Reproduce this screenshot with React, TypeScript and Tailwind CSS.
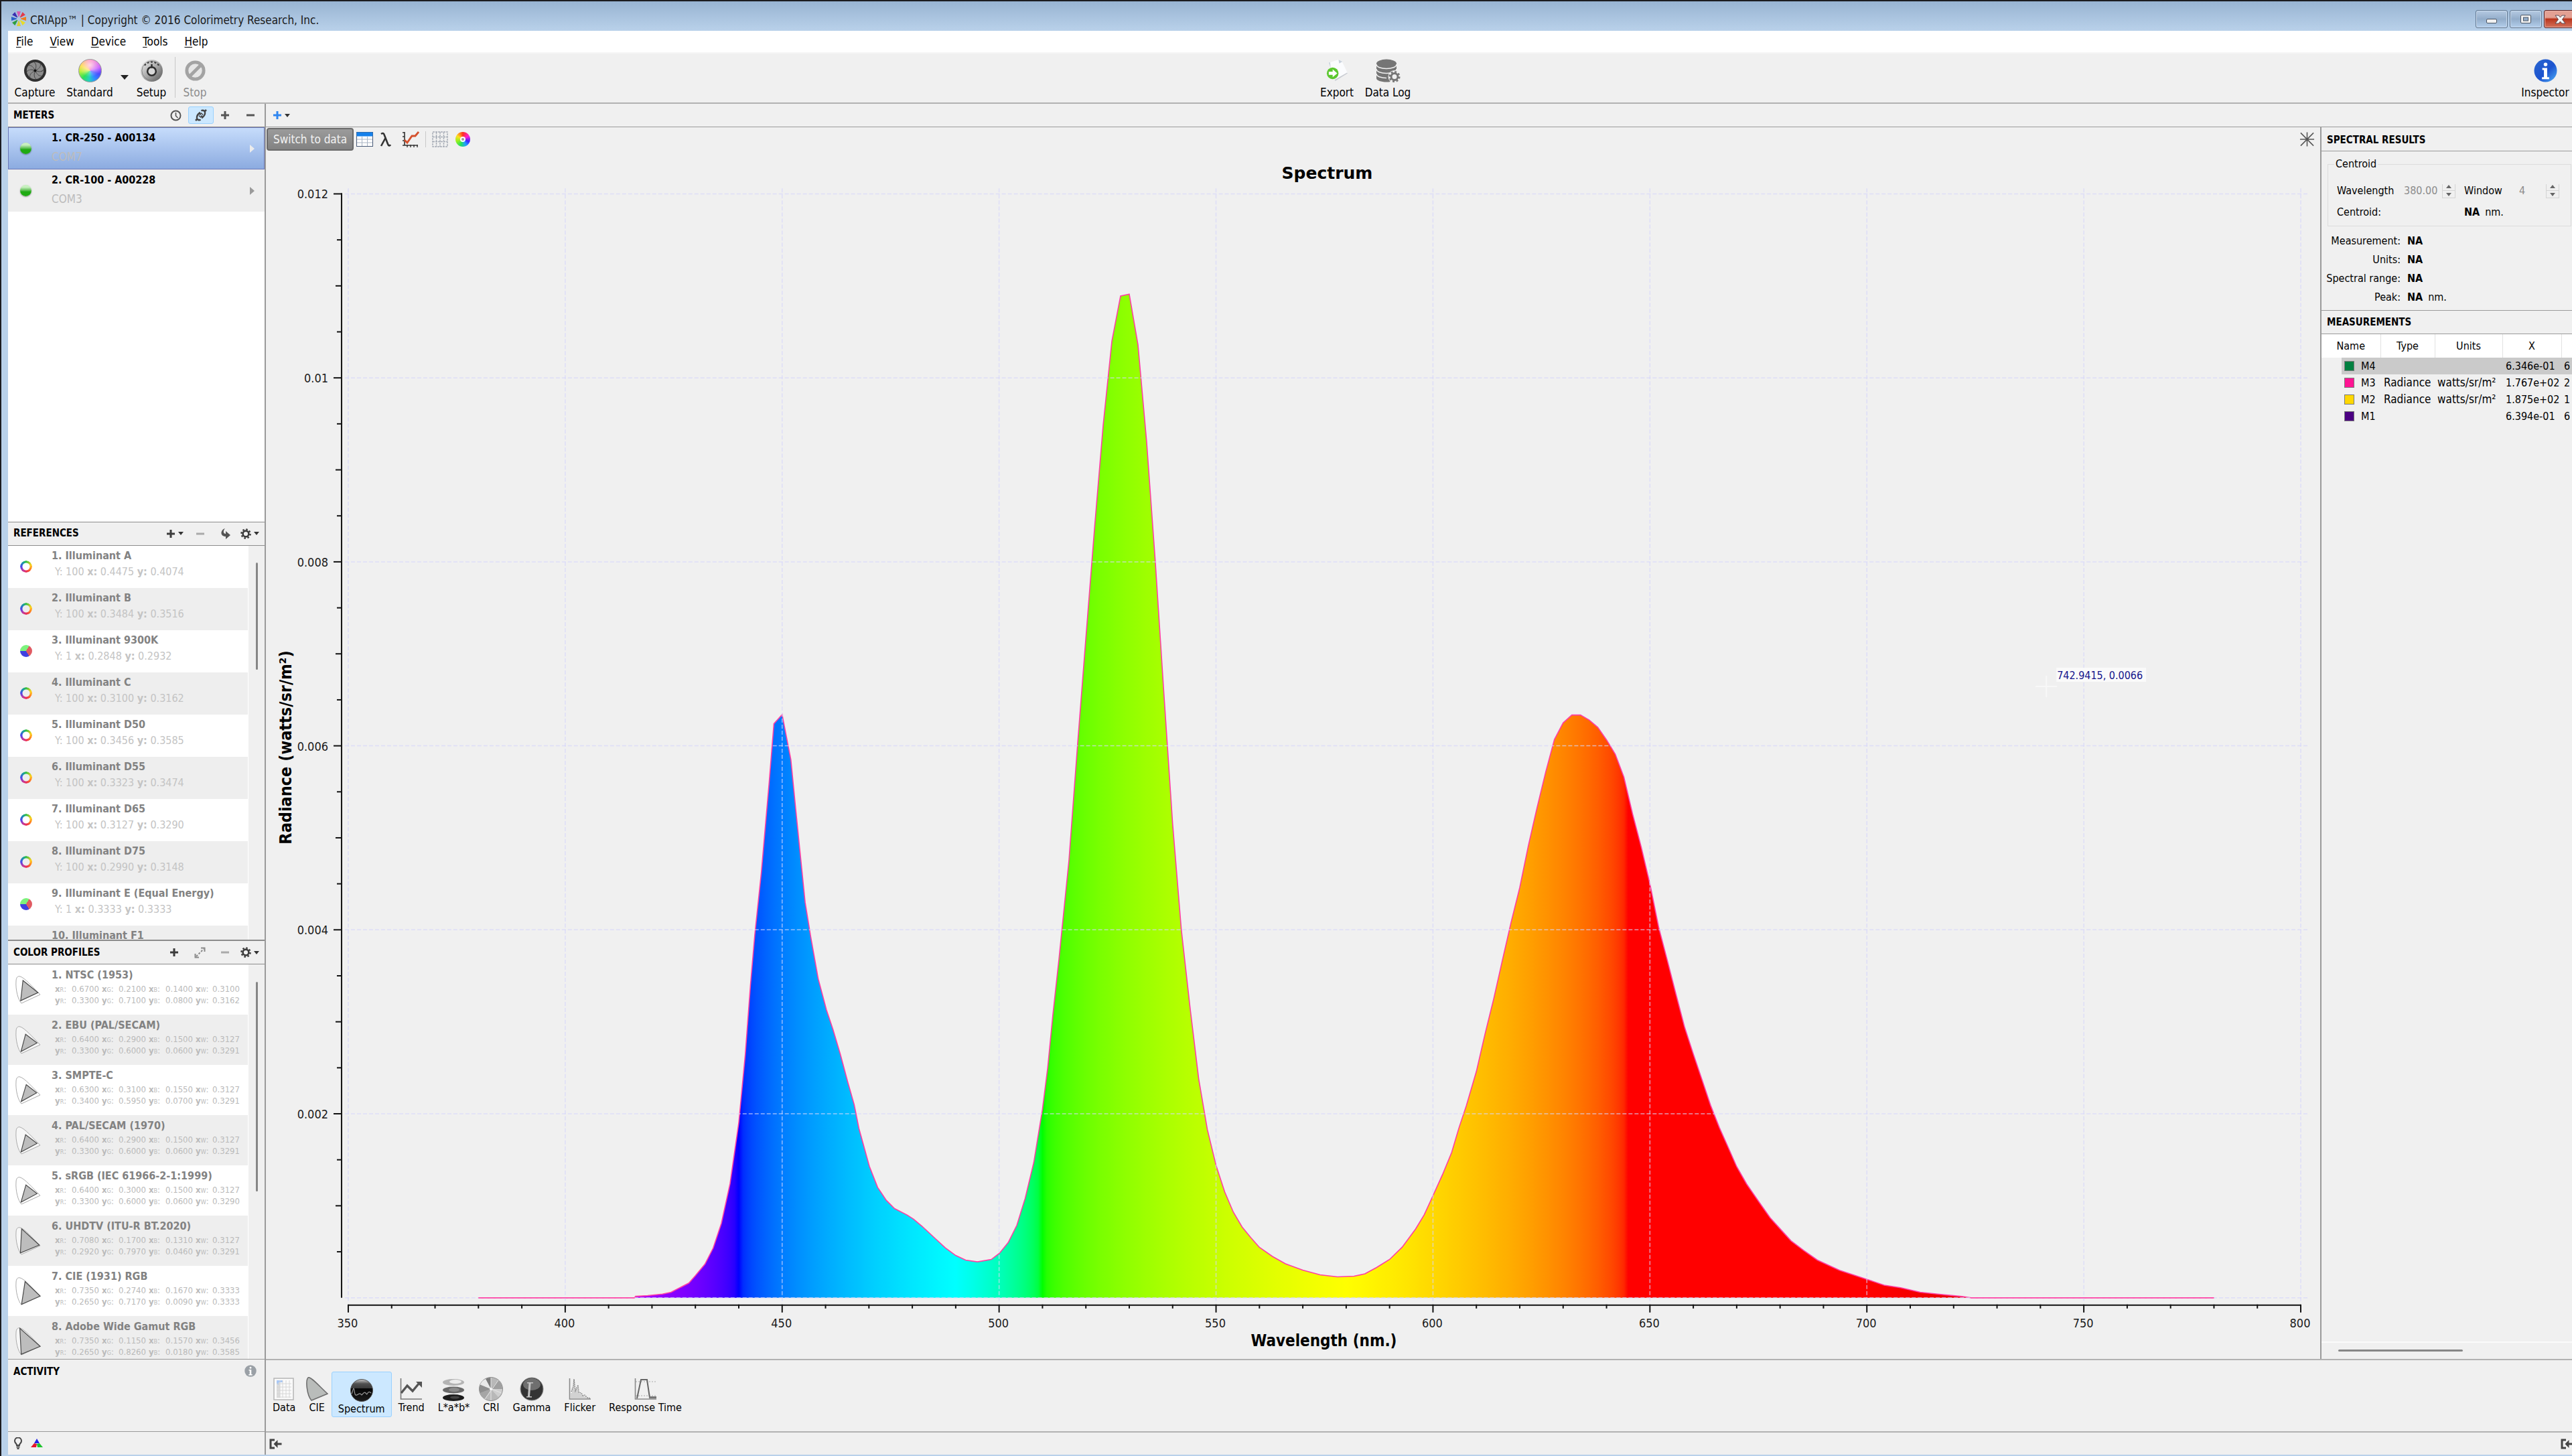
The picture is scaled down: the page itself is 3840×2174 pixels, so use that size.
import type { ReactNode } from "react";

// wavelength (nm) / radiance (1e-3 watts/sr/m²)
const spectrum: [number, number][] = [
  [380, 0], [416, 0], [416.2, 0.015], [419, 0.024], [422.4, 0.04], [424.4, 0.06], [428.5, 0.16], [430, 0.24],
  [432.2, 0.365], [434.1, 0.54], [436, 0.81], [438, 1.24], [440, 1.9], [441.5, 2.64], [442.7, 3.4], [443.7, 3.95],
  [445.2, 4.62], [447, 5.6], [448.1, 6.24], [450, 6.34], [452, 5.85], [453.2, 5.28], [455.3, 4.3], [456.6, 3.92],
  [458.3, 3.47], [460.2, 3.13], [461.7, 2.92], [463.4, 2.65], [465.1, 2.35], [466.6, 2.1], [467.7, 1.84], [470.1, 1.43],
  [472, 1.2], [474, 1.06], [475.9, 0.97], [478.8, 0.9], [480.3, 0.855], [482.3, 0.775], [485.2, 0.648], [487.6, 0.544],
  [490, 0.46], [492.3, 0.41], [495, 0.39], [498.2, 0.416], [500.1, 0.484], [502.1, 0.6], [504.1, 0.79], [506, 1.08],
  [508, 1.47], [510, 2.05], [511.2, 2.5], [512.4, 3.08], [513.8, 3.68], [516.1, 4.75], [518.1, 6.02], [520, 7.17],
  [522, 8.37], [524, 9.49], [526, 10.4], [528, 10.89], [530, 10.91], [532, 10.36], [534, 9.31], [536, 8], [538, 6.56],
  [540, 5.15], [542, 4], [544, 3.16], [546, 2.38], [548, 1.83], [550, 1.44], [552, 1.15], [554, 0.93], [556, 0.77],
  [558, 0.656], [560, 0.548], [563, 0.45], [566, 0.37], [570, 0.3], [574, 0.25], [578, 0.228], [581.8, 0.235],
  [584.3, 0.26], [587, 0.33], [590, 0.417], [592.9, 0.55], [596, 0.748], [598, 0.904], [600, 1.11], [602.2, 1.34],
  [604.3, 1.58], [606, 1.85], [607.7, 2.09], [610, 2.46], [612, 2.87], [614, 3.25], [616, 3.67], [618, 4.08],
  [620, 4.46], [622, 4.92], [624, 5.33], [626, 5.72], [628, 6.07], [630, 6.25], [632, 6.335], [634, 6.335],
  [636, 6.28], [638, 6.2], [640, 6.065], [642, 5.91], [644, 5.66], [646, 5.26], [648, 4.9], [650, 4.5], [652, 4.03],
  [654, 3.67], [656, 3.3], [658, 2.94], [660, 2.65], [662, 2.37], [664, 2.09], [666, 1.85], [668, 1.64], [670, 1.425],
  [672.3, 1.236], [675.2, 1.037], [677.7, 0.87], [680.3, 0.734], [682.5, 0.62], [685.4, 0.516], [688.6, 0.41],
  [693.7, 0.298], [700, 0.2], [704, 0.137], [707.8, 0.109], [712.3, 0.06], [716.7, 0.038], [722, 0.014], [724, 0],
  [780, 0],
];

const px = (nm: number) => 123 + (nm - 350) * 6.48;
const py = (v: number) => 1712 - v * 137.4;

const line = spectrum.map(([nm, v]) => `${px(nm).toFixed(1)},${py(v).toFixed(1)}`).join(" ");

function wavelengthColor(w: number) {
  let r = 0;
  let g = 0;
  let b = 0;
  if (w < 440) {
    r = (440 - w) / 60;
    b = 1;
  } else if (w < 490) {
    g = (w - 440) / 50;
    b = 1;
  } else if (w < 510) {
    g = 1;
    b = (510 - w) / 20;
  } else if (w < 580) {
    r = (w - 510) / 70;
    g = 1;
  } else if (w < 645) {
    r = 1;
    g = (645 - w) / 65;
  } else {
    r = 1;
  }
  const fade = w > 700 ? 0.3 + (0.7 * (780 - w)) / 80 : 1;
  const c = (n: number) => Math.round(255 * Math.pow(n * fade, 0.45));
  return `rgb(${c(r)},${c(g)},${c(b)})`;
}

const stops = Array.from({ length: 401 }, (_, i) => 380 + i);

const references = [
  ["1. Illuminant A", "100", "0.4475", "0.4074"],
  ["2. Illuminant B", "100", "0.3484", "0.3516"],
  ["3. Illuminant 9300K", "1", "0.2848", "0.2932"],
  ["4. Illuminant C", "100", "0.3100", "0.3162"],
  ["5. Illuminant D50", "100", "0.3456", "0.3585"],
  ["6. Illuminant D55", "100", "0.3323", "0.3474"],
  ["7. Illuminant D65", "100", "0.3127", "0.3290"],
  ["8. Illuminant D75", "100", "0.2990", "0.3148"],
  ["9. Illuminant E (Equal Energy)", "1", "0.3333", "0.3333"],
  ["10. Illuminant F1", "", "", ""],
];

const profiles = [
  { name: "1. NTSC (1953)", x: ["0.6700", "0.2100", "0.1400", "0.3100"], y: ["0.3300", "0.7100", "0.0800", "0.3162"] },
  { name: "2. EBU (PAL/SECAM)", x: ["0.6400", "0.2900", "0.1500", "0.3127"], y: ["0.3300", "0.6000", "0.0600", "0.3291"] },
  { name: "3. SMPTE-C", x: ["0.6300", "0.3100", "0.1550", "0.3127"], y: ["0.3400", "0.5950", "0.0700", "0.3291"] },
  { name: "4. PAL/SECAM (1970)", x: ["0.6400", "0.2900", "0.1500", "0.3127"], y: ["0.3300", "0.6000", "0.0600", "0.3291"] },
  { name: "5. sRGB (IEC 61966-2-1:1999)", x: ["0.6400", "0.3000", "0.1500", "0.3127"], y: ["0.3300", "0.6000", "0.0600", "0.3290"] },
  { name: "6. UHDTV (ITU-R BT.2020)", x: ["0.7080", "0.1700", "0.1310", "0.3127"], y: ["0.2920", "0.7970", "0.0460", "0.3291"] },
  { name: "7. CIE (1931) RGB", x: ["0.7350", "0.2740", "0.1670", "0.3333"], y: ["0.2650", "0.7170", "0.0090", "0.3333"] },
  { name: "8. Adobe Wide Gamut RGB", x: ["0.7350", "0.1150", "0.1570", "0.3456"], y: ["0.2650", "0.8260", "0.0180", "0.3585"] },
];

const measurements = [
  { name: "M4", color: "bg-[#008040]", type: "", units: "", x: "6.346e-01", y: "6" },
  { name: "M3", color: "bg-[#ff1493]", type: "Radiance", units: "watts/sr/m²", x: "1.767e+02", y: "2" },
  { name: "M2", color: "bg-[#ffd700]", type: "Radiance", units: "watts/sr/m²", x: "1.875e+02", y: "1" },
  { name: "M1", color: "bg-[#4b0082]", type: "", units: "", x: "6.394e-01", y: "6" },
];

/* ---------- small glyphs ---------- */

function Caret() {
  return (
    <svg className="w-[8px] h-[5px]" viewBox="0 0 8 5">
      <path d="M0 0h8L4 5z" fill="#333" />
    </svg>
  );
}

function Plus({ color = "#3c3c3c" }: { color?: string }) {
  return (
    <svg className="w-[14px] h-[14px]" viewBox="0 0 14 14">
      <path d="M7 1v12M1 7h12" stroke={color} strokeWidth="3" />
    </svg>
  );
}

function Minus({ color = "#555" }: { color?: string }) {
  return (
    <svg className="w-[14px] h-[14px]" viewBox="0 0 14 14">
      <path d="M1 7h12" stroke={color} strokeWidth="3" />
    </svg>
  );
}

function Gear() {
  return (
    <svg className="w-[16px] h-[16px]" viewBox="0 0 16 16" fill="none" stroke="#3c3c3c">
      <circle cx="8" cy="8" r="4.4" strokeWidth="2.6" />
      <circle cx="8" cy="8" r="6.6" strokeWidth="2.4" strokeDasharray="2.6 2.58" />
    </svg>
  );
}

function Plug() {
  return (
    <svg className="w-[18px] h-[18px]" viewBox="0 0 18 18" fill="none" stroke="#444">
      <path d="M1 17l3-3M14 4l3-3" strokeWidth="2.600" />
      <path d="M8.500 15.500c-2 1.500-5 .5-5.500-2-.5-3 1.500-6 4-8l1.500 3" strokeWidth="2.400" />
      <path d="M9.500 2.500c2-1.500 5-.5 5.500 2 .5 3-1.500 6-4 8L9.500 9.500" strokeWidth="2.400" />
      <path d="M6 9.500l3 3M9 5.500l3 3" strokeWidth="1.600" />
    </svg>
  );
}

function Info({ muted = false }: { muted?: boolean }) {
  return (
    <svg className={muted ? "w-[18px] h-[18px]" : "w-[35px] h-[35px]"} viewBox="0 0 36 36">
      <defs>
        <linearGradient id="infoBlue" x1="0" y1="0" x2="1" y2="1">
          <stop offset="0" stopColor="#2a66cf" />
          <stop offset="0.55" stopColor="#1c53cf" />
          <stop offset="1" stopColor="#4fb0f8" />
        </linearGradient>
      </defs>
      <circle cx="18" cy="18" r="17.5" fill={muted ? "#9aa0a6" : "url(#infoBlue)"} />
      <circle cx="18" cy="8.5" r="2.8" fill="#fff" />
      <path d="M13 14h7.500v14h3v3H12.500v-3h3V17H13z" fill="#fff" />
    </svg>
  );
}

function DockIcon() {
  return (
    <svg className="w-[20px] h-[16px] shrink-0" viewBox="0 0 20 16">
      <path d="M8 2H2v12h6" fill="none" stroke="#444" strokeWidth="3" />
      <path d="M18.500 8h-9" stroke="#444" strokeWidth="3" />
      <path d="M6.500 8l6-6v12z" fill="#444" />
    </svg>
  );
}

/* ---------- toolbar icons ---------- */

function CaptureIcon() {
  return (
    <svg className="w-[35px] h-[35px]" viewBox="0 0 36 36">
      <circle cx="18" cy="18" r="17" fill="#2f2f2f" />
      <circle cx="18" cy="18" r="13" fill="#8c8c8c" />
      <g fill="none" stroke="#4a4a4a" strokeWidth="1">
        {[0, 45, 90, 135, 180, 225, 270, 315].map((a) => (
          <path key={a} d="M19 17c4-1 8-5 7-9" transform={`rotate(${a} 18 18)`} />
        ))}
      </g>
      <circle cx="18" cy="18" r="2" fill="#111" />
    </svg>
  );
}

function SetupIcon() {
  return (
    <svg className="w-[35px] h-[35px]" viewBox="0 0 36 36">
      <defs>
        <linearGradient id="knob" x1="0" y1="0" x2="1" y2="1">
          <stop offset="0" stopColor="#f4f4f4" />
          <stop offset="0.5" stopColor="#aaa" />
          <stop offset="1" stopColor="#555" />
        </linearGradient>
      </defs>
      <circle cx="18" cy="18" r="17" fill="url(#knob)" />
      <circle cx="18" cy="18" r="15" fill="none" stroke="#777" strokeWidth="0.800" />
      <path d="M7 10a14 14 0 0 1 22 0" fill="none" stroke="#333" strokeWidth="2" strokeDasharray="3 2.500" />
      <circle cx="18" cy="19" r="6.500" fill="#d8d8d8" stroke="#2e2e2e" strokeWidth="2.600" />
      <path d="M18 8v6" stroke="#2e2e2e" strokeWidth="2.600" />
    </svg>
  );
}

function StopIcon() {
  return (
    <svg className="w-[35px] h-[35px]" viewBox="0 0 36 36" fill="none" stroke="#a3a3a3" strokeWidth="5">
      <circle cx="18" cy="18" r="13" fill="#e6e6e6" />
      <path d="M27 9L9 27" />
    </svg>
  );
}

function ExportIcon() {
  return (
    <svg className="w-[35px] h-[35px]" viewBox="0 0 36 36">
      <path d="M5 6L20 1l5 2 9 19-19 12z" fill="#fbfcfe" />
      <path d="M34 22L15 34l-1-2 19-11z" fill="#c9ccd2" />
      <path d="M5 6l3 8-1-9zM20 1l1 6 5-3z" fill="#c9d2dc" />
      <circle cx="11" cy="22" r="9" fill="#5cc72f" />
      <path d="M5 19.500h6V16l7 6-7 6v-3.500H5z" fill="#fff" />
    </svg>
  );
}

function DataLogIcon() {
  return (
    <svg className="w-[37px] h-[35px]" viewBox="0 0 37 35">
      <path d="M1 7v22c0 3 7 5.500 15 5.500s15-2.500 15-5.500V7z" fill="#757575" />
      <ellipse cx="16" cy="7" rx="15" ry="6.500" fill="#757575" />
      <g fill="none" stroke="#efefef" strokeWidth="1.600">
        <path d="M1 8c0 4 7 6.500 15 6.500S31 12 31 8" />
        <path d="M1 15c0 4 7 6.500 15 6.500S31 19 31 15" />
        <path d="M1 22c0 4 7 6.500 15 6.500" />
      </g>
      <circle cx="28" cy="26.500" r="9.500" fill="#efefef" />
      <circle cx="28" cy="26.500" r="5" fill="none" stroke="#757575" strokeWidth="3" />
      <circle cx="28" cy="26.500" r="7.300" fill="none" stroke="#757575" strokeWidth="2.500" strokeDasharray="2.900 2.830" />
    </svg>
  );
}

/* ---------- view icons ---------- */

function DataIcon() {
  return (
    <svg className="w-[34px] h-[36px]" viewBox="0 0 34 36">
      <rect x="2" y="2" width="29" height="32" fill="#fafafa" stroke="#b5b5b5" strokeWidth="1.500" />
      <rect x="6" y="5" width="5" height="26" fill="#dcdcdc" />
      <path d="M6 10V5h9v3H9v4z" fill="#a9c8f5" />
      <path d="M6 10h22M6 15h22M6 20h22M6 25h22M6 30h22M11 5v26M15 5v26M20 5v26M25 5v26" stroke="#d4d4d4" strokeWidth="0.900" />
    </svg>
  );
}

function CieIcon() {
  return (
    <svg className="w-[34px] h-[36px]" viewBox="0 0 34 36">
      <path d="M9 35C2 27 0 5 4 1c3-3 17 13 29 24z" fill="#b9bcba" stroke="#6e6e6e" strokeWidth="1.600" />
    </svg>
  );
}

function SpectrumIcon() {
  return (
    <svg className="w-[34px] h-[36px]" viewBox="0 0 34 36">
      <defs>
        <linearGradient id="orb" x1="0" y1="0" x2="0" y2="1">
          <stop offset="0" stopColor="#c9c9c9" />
          <stop offset="0.200" stopColor="#505050" />
          <stop offset="0.400" stopColor="#3a3a3a" />
          <stop offset="0.410" stopColor="#050505" />
          <stop offset="1" stopColor="#1c1c1c" />
        </linearGradient>
      </defs>
      <circle cx="17" cy="18" r="16.500" fill="url(#orb)" stroke="#555" strokeWidth="1" />
      <path d="M2 23c1-1 2-8 3-8s1 9 3 10 5-3 7-2 1 3 3 1 3-4 5-2 1 3 3 0 4-1 5 0" fill="none" stroke="#9a9a9a" strokeWidth="1.200" />
    </svg>
  );
}

function TrendIcon() {
  return (
    <svg className="w-[34px] h-[36px]" viewBox="0 0 34 36" fill="none">
      <path d="M1.500 2v31H33" stroke="#777" strokeWidth="1.600" />
      <path d="M2 24l9-11 8 8L29 9" stroke="#555" strokeWidth="3.400" />
      <path d="M24 7h9v9z" fill="#555" />
    </svg>
  );
}

function LabIcon() {
  return (
    <svg className="w-[34px] h-[36px]" viewBox="0 0 34 36">
      <ellipse cx="17" cy="8" rx="16" ry="5" fill="#b4b4b4" />
      <ellipse cx="20" cy="7" rx="9" ry="3" fill="#ededed" />
      <ellipse cx="17" cy="19.500" rx="16" ry="5" fill="#6a6a6a" />
      <ellipse cx="18" cy="19" rx="8" ry="3" fill="#8c8c8c" />
      <ellipse cx="17" cy="31" rx="16" ry="5" fill="#1c1c1c" />
      <ellipse cx="19" cy="30.500" rx="7" ry="2" fill="#444" />
    </svg>
  );
}

function CriIcon() {
  return (
    <svg className="w-[36px] h-[36px]" viewBox="0 0 36 36">
      <circle cx="18" cy="18" r="17.500" fill="#b8b8b8" stroke="#8e8e8e" />
      <path d="M18 18L10 3a17 17 0 0 1 8-2z" fill="#7b7b7b" />
      <path d="M18 18L2 11a17 17 0 0 1 8-8z" fill="#e9e9e9" />
      <path d="M18 18L2 24a17 17 0 0 1 0-13z" fill="#8f8f8f" />
      <path d="M18 18L9 33a17 17 0 0 1-7-9z" fill="#a5a5a5" />
      <path d="M18 18h17a17 17 0 0 1-6 12z" fill="#cfcfcf" />
      <path d="M18 18L29 5a17 17 0 0 1 6 13z" fill="#a0a0a0" />
      <path d="M18 1v34M29 5L9 33M2 11l32 13" stroke="#e6e6e6" strokeWidth="1" />
      <circle cx="18" cy="18" r="2" fill="#f5f5f5" />
    </svg>
  );
}

function GammaIcon() {
  return (
    <svg className="w-[36px] h-[36px]" viewBox="0 0 36 36">
      <circle cx="18" cy="18" r="17" fill="#343434" stroke="#8d8d8d" />
      <ellipse cx="18" cy="11" rx="13" ry="9" fill="#6f6f6f" />
      <path d="M11 8h9v1.500h-3.500L15 29h3v1.500h-8V29h2l1.500-19.500H11z" fill="#c4c4c4" />
    </svg>
  );
}

function FlickerIcon() {
  return (
    <svg className="w-[34px] h-[36px]" viewBox="0 0 34 36" fill="none">
      <path d="M3 32V24h2v-7h2V4h2v16h2v-4h3v6h2v3h3v2h4v2h3v2h4v1z" fill="#d2d2d2" />
      <path d="M1.500 2v31H33" stroke="#8a8a8a" strokeWidth="1.600" />
      <path d="M4 22l3-8 1-11 2 18 4-9 1 11 4 1 2 4 3-1 4 4 5 1" stroke="#8a8a8a" strokeWidth="1.400" strokeDasharray="2 1" />
    </svg>
  );
}

function ResponseIcon() {
  return (
    <svg className="w-[34px] h-[36px]" viewBox="0 0 34 36" fill="none">
      <path d="M2 7h31M2 28h31" stroke="#a8a8a8" strokeWidth="1.200" strokeDasharray="2 2" />
      <path d="M1.500 2v31H33" stroke="#8a8a8a" strokeWidth="1.600" />
      <path d="M4 32L10 4h9l4 27h10" stroke="#666" strokeWidth="2" />
      <path d="M22 29h11v3H22z" fill="#777" />
    </svg>
  );
}

const views = [
  { label: "Data", icon: <DataIcon /> },
  { label: "CIE", icon: <CieIcon /> },
  { label: "Spectrum", icon: <SpectrumIcon />, active: true },
  { label: "Trend", icon: <TrendIcon /> },
  { label: "L*a*b*", icon: <LabIcon /> },
  { label: "CRI", icon: <CriIcon /> },
  { label: "Gamma", icon: <GammaIcon /> },
  { label: "Flicker", icon: <FlickerIcon /> },
  { label: "Response Time", icon: <ResponseIcon /> },
];

/* ---------- window chrome ---------- */

function TitleBar() {
  return (
    <header className="flex items-start h-[46px] shrink-0 pl-[15px] border-t-2 border-[#1c1c20] bg-linear-to-b from-[#98b4d2] to-[#b9d1ea] overflow-hidden">
      <svg className="w-[22px] h-[22px] mt-[15px]" viewBox="0 0 22 22">
        {["#d65bb0", "#e23a4b", "#ef7d1b", "#e8dc2c", "#d9cf3a", "#2f9e3f", "#2b62c9", "#3b2fb0"].map((c, i) => (
          <path key={c} d="M10.500 8L8 0h6l-2.500 8z" fill={c} transform={`rotate(${i * 45} 11 11)`} />
        ))}
      </svg>
      <h1 className="ml-[6px] mt-[16px] text-[17px] leading-[24px] text-[#1a1a1a]">
        CRIApp™ | Copyright © 2016 Colorimetry Research, Inc.
      </h1>
      <div className="flex gap-[3px] ml-auto -mr-[7px] mt-[13px]">
        <button aria-label="Minimize" className="flex items-center justify-center w-[48px] h-[27px] rounded-[3px] border border-[#5f7690] shadow-[inset_0_0_0_1px_#ccdcee] bg-linear-to-b from-[#b5cae2] via-[#93adca] to-[#b4cfec]">
          <span className="w-[16px] h-[7px] mt-[5px] rounded-[2px] border border-[#4b5665] bg-[#f0f0f0]" />
        </button>
        <button aria-label="Maximize" className="flex items-center justify-center w-[48px] h-[27px] rounded-[3px] border border-[#5f7690] shadow-[inset_0_0_0_1px_#ccdcee] bg-linear-to-b from-[#b5cae2] via-[#93adca] to-[#b4cfec]">
          <svg className="w-[16px] h-[13px]" viewBox="0 0 16 13" fill="none">
            <rect x="0.500" y="0.500" width="15" height="12" rx="1.500" fill="#f0f0f0" stroke="#4b5665" />
            <rect x="4.500" y="4" width="7" height="5" fill="#93adca" stroke="#4b5665" />
          </svg>
        </button>
        <button aria-label="Close" className="flex items-center justify-center w-[49px] h-[27px] rounded-[3px] border border-[#5a1f1f] shadow-[inset_0_0_0_1px_#e9b3a9] bg-linear-to-b from-[#e3a093] from-40% via-[#b9351c] via-50% to-[#d4705a]">
          <svg className="w-[17px] h-[14px]" viewBox="0 0 17 14">
            <path d="M1 1h5l2.500 3L11 1h5l-4.500 6 4.500 6h-5L8.500 10 6 13H1l4.500-6z" fill="#f5f5f5" stroke="#5d4a55" />
          </svg>
        </button>
      </div>
    </header>
  );
}

function MenuBar() {
  return (
    <nav className="flex items-center h-[34px] shrink-0 pt-[2px] pl-[12px] gap-[25px] bg-white border-b-2 border-[#f6f6f6] text-[17px]">
      {["File", "View", "Device", "Tools", "Help"].map((item) => (
        <button key={item}>
          <span className="underline underline-offset-2">{item[0]}</span>
          {item.slice(1)}
        </button>
      ))}
    </nav>
  );
}

function ToolButton({ label, width, children, disabled }: { label: string; width: string; children: ReactNode; disabled?: boolean }) {
  return (
    <button disabled={disabled} className={`flex flex-col items-center gap-[5px] ${width} ${disabled ? "text-[#8c8c8c]" : ""}`}>
      {children}
      <span className="text-[17px] leading-[20px] whitespace-nowrap">{label}</span>
    </button>
  );
}

function Toolbar() {
  return (
    <div className="flex justify-between h-[75px] shrink-0 pt-[8px] border-b-2 border-[#b2b2b2]">
      <div className="flex">
        <ToolButton label="Capture" width="w-[80px]">
          <CaptureIcon />
        </ToolButton>
        <ToolButton label="Standard" width="w-[84px]">
          <span className="w-[35px] h-[35px] rounded-full border border-[#999] bg-[radial-gradient(circle_at_50%_25%,#fffb_0,#fff0_60%),conic-gradient(#ff5fa8,#c34dff_70deg,#4a4dff_110deg,#2e8cff_150deg,#22d0c0_185deg,#2ee05a_225deg,#b9f03a_265deg,#ffd83a_300deg,#ff5fa8)]" />
        </ToolButton>
        <button aria-label="Standard options" className="flex items-center justify-center w-[20px] h-[55px]">
          <svg className="w-[12px] h-[7px]" viewBox="0 0 12 7">
            <path d="M0 0h12L6 7z" fill="#222" />
          </svg>
        </button>
        <ToolButton label="Setup" width="w-[60px]">
          <SetupIcon />
        </ToolButton>
        <span className="w-px h-[61px] -mt-[3px] ml-[5px] mr-[6px] bg-[#c8c8c8]" />
        <ToolButton label="Stop" width="w-[46px]" disabled>
          <StopIcon />
        </ToolButton>
      </div>
      <div className="flex pr-[6px]">
        <ToolButton label="Export" width="w-[76px]">
          <ExportIcon />
        </ToolButton>
        <ToolButton label="Data Log" width="w-[76px]">
          <DataLogIcon />
        </ToolButton>
      </div>
      <ToolButton label="Inspector" width="w-[80px]">
        <Info />
      </ToolButton>
    </div>
  );
}

/* ---------- left column ---------- */

function Scrollbar({ thumb }: { thumb: string }) {
  return (
    <div className="w-[25px] shrink-0 pl-[11px] bg-[#f0f0f0] border-l border-white">
      <div className={`w-[3px] rounded-full bg-[#868686] ${thumb}`} />
    </div>
  );
}

function Meters() {
  return (
    <>
      <div className="flex items-center h-[35px] shrink-0 pl-[8px] pr-[14px] border-b border-[#8c8c8c]">
        <h2 className="text-[15px] font-bold">METERS</h2>
        <button aria-label="History" className="ml-auto">
          <svg className="w-[17px] h-[17px]" viewBox="0 0 17 17" fill="none" stroke="#555">
            <circle cx="8.500" cy="8.500" r="7" strokeWidth="2" />
            <path d="M8.500 4v5l3 3" strokeWidth="1.600" />
          </svg>
        </button>
        <button aria-label="Connect" aria-pressed="true" className="flex items-center justify-center w-[38px] h-[26px] ml-[10px] rounded-[3px] border border-[#99d1ff] bg-[#cce8ff]">
          <Plug />
        </button>
        <button aria-label="Add meter" className="ml-[10px]">
          <Plus color="#555" />
        </button>
        <button aria-label="Remove meter" className="ml-[24px]">
          <Minus />
        </button>
      </div>
      <ul className="flex-1 basis-0 min-h-0 bg-white">
        {[
          ["1. CR-250 - A00134", "COM7"],
          ["2. CR-100 - A00228", "COM3"],
        ].map(([name, port], i) => (
          <li
            key={name}
            className={`flex items-center h-[63px] pr-[14px] border ${
              i === 0 ? "border-[#6b78b8] bg-linear-to-b from-[#c6dcfb] to-[#8cabe0]" : "border-[#eee] bg-[#eee]"
            }`}
          >
            <span className="w-[17px] h-[17px] ml-[17px] rounded-full shadow-[0_1px_2px_#0006] bg-linear-to-b from-[#c8f0c0] from-20% to-[#1faa12] to-60%" />
            <div className="ml-[30px] pb-[2px]">
              <div className="text-[16px] leading-[26px] font-bold">{name}</div>
              <div className="text-[17px] leading-[30px] text-[#bcbcbc]">{port}</div>
            </div>
            <svg className="w-[7px] h-[12px] ml-auto" viewBox="0 0 7 12">
              <path d="M0 0l7 6-7 6z" fill={i === 0 ? "#ececec" : "#9a9a9a"} />
            </svg>
          </li>
        ))}
      </ul>
    </>
  );
}

function ReferenceIcon({ kind }: { kind: string }) {
  if (kind === "") return <span className="w-[18px]" />;
  return kind === "1" ? (
    <span className="w-[18px] h-[18px] rounded-full bg-[conic-gradient(from_30deg,#e05a62_120deg,#4040e0_120deg_240deg,#7cf27c_240deg)]" />
  ) : (
    <span className="w-[18px] h-[18px] rounded-full bg-[conic-gradient(#2fc040,#ffd21f_70deg,#ff8a1f_115deg,#f2304a_170deg,#c038a0_220deg,#4a48f0_270deg,#1898a8_320deg,#2fc040)] [mask:radial-gradient(circle,transparent_5px,black_6px)]" />
  );
}

function References() {
  return (
    <>
      <div className="flex items-center h-[36px] shrink-0 pl-[8px] pr-[8px] border-t border-b border-[#8c8c8c]">
        <h2 className="text-[15px] font-bold">REFERENCES</h2>
        <button aria-label="Add reference" className="flex items-center gap-[4px] ml-auto">
          <Plus />
          <Caret />
        </button>
        <button aria-label="Remove reference" className="ml-[18px]">
          <Minus color="#aaa" />
        </button>
        <button aria-label="Apply reference" className="ml-[22px]">
          <svg className="w-[16px] h-[18px]" viewBox="0 0 16 18">
            <path d="M8 1C1 3 0 13 9 13v4l7-6-7-6v4C5 9 5 4 8 1z" fill="#555" />
          </svg>
        </button>
        <button aria-label="Reference options" className="flex items-center gap-[4px] ml-[15px]">
          <Gear />
          <Caret />
        </button>
      </div>
      <div className="flex flex-1 basis-0 min-h-0 overflow-hidden bg-white">
        <ul className="flex-1">
          {references.map(([name, Y, x, y]) => (
            <li key={name} className="flex items-center h-[63px] pl-[18px] even:bg-[#eee]">
              <ReferenceIcon kind={Y} />
              <div className="ml-[29px]">
                <div className="text-[16px] leading-[24px] font-bold text-[#828282]">{name}</div>
                <div className="h-[33px] ml-[5px] text-[16px] leading-[24px] text-[#c4c4c4] whitespace-pre">
                  {Y && (
                    <>
                      Y: {Y} <b>x:</b> {x} <b>y:</b> {y}
                    </>
                  )}
                </div>
              </div>
            </li>
          ))}
        </ul>
        <Scrollbar thumb="h-[160px] mt-[25px]" />
      </div>
    </>
  );
}

function GamutIcon({ x, y }: { x: string[]; y: string[] }) {
  const points = [0, 1, 2].map((i) => `${1 + Number(x[i]) * 49},${42 - Number(y[i]) * 48}`).join(" ");
  return (
    <svg className="w-[38px] h-[44px]" viewBox="0 0 38 44">
      <path d="M9 42C4 37 0 22 1 9 1 3 4 1 7 2c7 2 18 15 30 27z" fill="#fff" fillOpacity="0.500" stroke="#ababab" strokeWidth="1" />
      <polygon points={points} fill="#bdbdbd" stroke="#4a4a4a" strokeWidth="1.200" />
    </svg>
  );
}

function CoordRow({ axis, values }: { axis: string; values: string[] }) {
  return (
    <div className="flex h-[17px] text-[13px] leading-[17px] text-[#bababa]">
      {values.map((v, i) => (
        <div key={i} className="flex justify-between w-[66px] mr-[4px]">
          <span>
            <b>{axis}</b>
            <span className="text-[9px]">{"RGBW"[i]}</span>:
          </span>
          <span>{v}</span>
        </div>
      ))}
    </div>
  );
}

function ColorProfiles() {
  return (
    <>
      <div className="flex items-center h-[37px] shrink-0 pl-[8px] pr-[8px] border-t-2 border-b border-[#8c8c8c]">
        <h2 className="text-[15px] font-bold">COLOR PROFILES</h2>
        <button aria-label="Add profile" className="ml-auto">
          <Plus />
        </button>
        <button aria-label="Expand profile" className="ml-[23px]">
          <svg className="w-[17px] h-[17px]" viewBox="0 0 17 17" fill="none" stroke="#8a8a8a" strokeWidth="2">
            <path d="M10 1.500h5.500V7M7 15.500H1.500V10" />
            <path d="M3 14L14 3" strokeDasharray="3 2" />
          </svg>
        </button>
        <button aria-label="Remove profile" className="ml-[22px]">
          <Minus color="#aaa" />
        </button>
        <button aria-label="Profile options" className="flex items-center gap-[4px] ml-[16px]">
          <Gear />
          <Caret />
        </button>
      </div>
      <div className="flex flex-1 basis-0 min-h-0 overflow-hidden bg-white">
        <ul className="flex-1">
          {profiles.map((p) => (
            <li key={p.name} className="flex items-center h-[75px] pl-[11px] even:bg-[#eee]">
              <GamutIcon x={p.x} y={p.y} />
              <div className="ml-[16px] pb-[9px]">
                <div className="text-[16px] leading-[24px] font-bold text-[#828282]">{p.name}</div>
                <div className="ml-[5px]">
                  <CoordRow axis="x" values={p.x} />
                  <CoordRow axis="y" values={p.y} />
                </div>
              </div>
            </li>
          ))}
        </ul>
        <Scrollbar thumb="h-[313px] mt-[26px]" />
      </div>
    </>
  );
}

function Sidebar() {
  return (
    <aside className="flex flex-col w-[385px] shrink-0 border-r-2 border-[#9a9a9a]">
      <Meters />
      <References />
      <ColorProfiles />
      <section className="flex justify-between h-[108px] shrink-0 pt-[8px] pl-[8px] pr-[12px] border-t border-[#9a9a9a]">
        <h2 className="text-[15px] leading-[20px] font-bold">ACTIVITY</h2>
        <Info muted />
      </section>
      <footer className="flex items-center h-[35px] shrink-0 pl-[9px] gap-[13px] border-t border-[#9a9a9a]">
        <button aria-label="Lamp">
          <svg className="w-[12px] h-[18px]" viewBox="0 0 12 18" fill="none" stroke="#444" strokeWidth="2">
            <path d="M4 12c0-3-3-3-3-6.500a5 5 0 0 1 10 0C11 9 8 9 8 12z" />
            <path d="M3.500 14.500h5M4.500 17h3" />
          </svg>
        </button>
        <button aria-label="Gamut">
          <svg className="w-[18px] h-[14px]" viewBox="0 0 18 14">
            <path d="M9 0l4 7H5z" fill="#2323e6" />
            <path d="M5 7l4 1-1 5H0z" fill="#e6142d" />
            <path d="M13 7l5 6h-8L9 8z" fill="#1ec32d" />
          </svg>
        </button>
      </footer>
    </aside>
  );
}

/* ---------- chart ---------- */

function ChartTools() {
  return (
    <div className="flex items-center h-[36px] shrink-0 pl-px">
      <button className="h-[34px] px-[8px] rounded-[4px] border-2 border-[#6b6b6b] bg-linear-to-b from-[#9b9b9b] to-[#828282] text-[17px] leading-[30px] text-[#f2f2f2]">
        Switch to data
      </button>
      <button aria-label="Table" className="ml-[4px]">
        <svg className="w-[25px] h-[22px]" viewBox="0 0 25 22">
          <rect x="0.500" y="0.500" width="24" height="21" fill="#fff" stroke="#4a5b78" />
          <rect x="0.500" y="0.500" width="24" height="6" fill="#1580ea" />
          <path d="M1 11h23M1 16h23M8.500 7v14M16.500 7v14" stroke="#a8b4c4" />
        </svg>
      </button>
      <button aria-label="Wavelength" className="w-[17px] ml-[10px]">
        <svg className="w-[17px] h-[22px]" viewBox="0 0 17 22" fill="none" stroke="#333" strokeWidth="2.600">
          <path d="M2 3c3-2 4-1 5 2l5 13c1 3 3 3 4 1M8.500 9L2 21" />
        </svg>
      </button>
      <button aria-label="Line chart" className="ml-[16px]">
        <svg className="w-[26px] h-[24px]" viewBox="0 0 26 24" fill="none">
          <path d="M4 1v20M1 21h23" stroke="#333" strokeWidth="1.600" />
          <path d="M1 2h3M1 8h3M1 14h3M8 20v4M13 20v4M18 20v4M23 20v4" stroke="#333" strokeWidth="1.400" />
          <path d="M4 13l4 4 7-10h5l5-6" stroke="#d4502c" strokeWidth="2.800" />
        </svg>
      </button>
      <span className="w-px h-[24px] mx-[9px] bg-[#c8c8c8]" />
      <button aria-label="Grid">
        <svg className="w-[24px] h-[24px]" viewBox="0 0 24 24" fill="none" stroke="#a5abb5" strokeWidth="1.400" strokeDasharray="3 1">
          <path d="M1 1h22v22H1zM1 8.500h22M1 15.500h22M6.500 1v22M12 1v22M17.500 1v22" />
        </svg>
      </button>
      <button aria-label="Colors" className="flex ml-[11px]">
        <span className="flex items-center justify-center w-[22px] h-[22px] rounded-full bg-[conic-gradient(#ff3020,#ff20d0_60deg,#4020ff_110deg,#20a0ff_150deg,#20e060_200deg,#90f020_250deg,#ffe020_300deg,#ff3020)]">
          <span className="w-[8px] h-[8px] rounded-full border-2 border-white bg-[#999]" />
        </span>
      </button>
      <button aria-label="Crosshair" className="ml-auto mr-[8px]">
        <svg className="w-[23px] h-[24px]" viewBox="0 0 24 24" stroke="#555" strokeWidth="1.600">
          <path d="M12 1v22M1 12h22M2 2l20 20M22 2L2 22" />
        </svg>
      </button>
    </div>
  );
}

function SpectrumChart() {
  const xMajor = [350, 400, 450, 500, 550, 600, 650, 700, 750, 800];
  const yMajor = [2, 4, 6, 8, 10, 12];
  const xMinor = Array.from({ length: 46 }, (_, i) => 350 + i * 10);
  const yMinor = Array.from({ length: 24 }, (_, i) => 0.5 + i * 0.5);
  return (
    <svg className="flex-1 min-h-0 w-full" viewBox="0 0 3068 1803" role="img" aria-label="Spectrum">
      <defs>
        <linearGradient id="visible" gradientUnits="userSpaceOnUse" x1={px(380)} x2={px(780)} y1="0" y2="0">
          {stops.map((w) => (
            <stop key={w} offset={(w - 380) / 400} stopColor={wavelengthColor(w)} />
          ))}
        </linearGradient>
      </defs>
      <text x="1585" y="41" textAnchor="middle" className="text-[25px] font-bold font-['DejaVu_Sans']">
        Spectrum
      </text>

      <polygon points={line} fill="url(#visible)" />
      <polyline points={line} fill="none" stroke="#ff3fa4" strokeWidth="1.600" />

      {/* grid sits over the fill */}
      <g stroke="#d6d6fb" strokeOpacity="0.700" strokeWidth="1.500" strokeDasharray="6 3">
        {xMajor.map((nm) => (
          <path key={nm} d={`M${px(nm)} 55V1720`} />
        ))}
        {[0, ...yMajor].map((v) => (
          <path key={v} d={`M118 ${py(v)}H3050`} />
        ))}
      </g>
      <path d={`M${px(380)} 1712H${px(416)}M${px(724)} 1712H${px(780)}`} stroke="#ff3fa4" strokeWidth="1.600" />

      <g stroke="#111" strokeWidth="2" fill="none">
        <path d="M113 62V1712M123 1723H3039" />
        {yMinor.map((v) => (
          <path key={v} d={`M113 ${py(v)}h${v % 2 === 0 ? -12 : v % 1 === 0 ? -9 : -7}`} />
        ))}
        {xMinor.map((nm) => (
          <path key={nm} d={`M${px(nm)} 1722v${nm % 50 === 0 ? 12 : 6}`} />
        ))}
      </g>

      <g className="text-[18px]" fill="#1a1a1a">
        {xMajor.map((nm) => (
          <text key={nm} x={px(nm) - 1} y="1756" textAnchor="middle">
            {nm}
          </text>
        ))}
        {yMajor.map((v) => (
          <text key={v} x="93" y={py(v) + 7} textAnchor="end">
            {v / 1000}
          </text>
        ))}
      </g>
      <g className="font-bold">
        <text x="1580" y="1784" textAnchor="middle" className="text-[24px]">
          Wavelength (nm.)
        </text>
        <text x="38" y="890" textAnchor="middle" transform="rotate(-90 38 890)" className="text-[25px]">
          Radiance (watts/sr/m²)
        </text>
      </g>

      {/* cursor read-out */}
      <path d="M2643 799h32M2659 783v32" stroke="#f8f8f8" strokeWidth="2" />
      <rect x="2674" y="771" width="134" height="21" fill="#fafafa" />
      <text x="2675" y="788" className="text-[16px]" fill="#14148c">
        742.9415, 0.0066
      </text>
    </svg>
  );
}

/* ---------- right column ---------- */

function Stepper() {
  return (
    <span className="flex flex-col items-center justify-around w-[20px] h-[21px] border border-t-0 border-[#d4d4d4]">
      <svg className="w-[8px] h-[5px]" viewBox="0 0 8 5">
        <path d="M0 5h8L4 0z" fill="#666" />
      </svg>
      <span className="w-full h-px bg-[#d4d4d4]" />
      <svg className="w-[8px] h-[5px]" viewBox="0 0 8 5">
        <path d="M0 0h8L4 5z" fill="#666" />
      </svg>
    </span>
  );
}

function Inspector() {
  return (
    <aside className="flex flex-col w-[376px] shrink-0 border-l-2 border-[#9a9a9a] text-[16px] overflow-hidden">
      <h2 className="h-[36px] shrink-0 pl-[8px] text-[15px] leading-[38px] font-bold border-b border-[#9a9a9a]">SPECTRAL RESULTS</h2>
      <div className="h-[237px] shrink-0 pt-[7px] pl-[9px]">
        <fieldset className="w-[364px] h-[105px] pl-[13px] border border-[#dcdcdc]">
          <legend className="-ml-[4px] px-[2px] leading-[24px]">Centroid</legend>
          <div className="flex items-center h-[22px] mt-[17px]">
            <label htmlFor="wavelength" className="w-[97px]">
              Wavelength
            </label>
            <input id="wavelength" disabled defaultValue="380.00" className="w-[60px] pl-[3px] text-[#8c8c8c]" />
            <Stepper />
            <label htmlFor="window" className="w-[78px] ml-[13px]">
              Window
            </label>
            <input id="window" disabled defaultValue="4" className="w-[44px] pl-[4px] text-[#8c8c8c]" />
            <Stepper />
          </div>
          <div className="flex h-[24px] mt-[9px] leading-[24px]">
            <span className="w-[190px]">Centroid:</span>
            <span>
              <b className="mr-[8px]">NA</b>nm.
            </span>
          </div>
        </fieldset>
        <dl className="grid grid-cols-[109px_1fr] gap-x-[10px] mt-[8px] leading-[28px]">
          {["Measurement:", "Units:", "Spectral range:", "Peak:"].map((label) => (
            <div key={label} className="contents">
              <dt className="flex justify-end whitespace-nowrap">{label}</dt>
              <dd>
                <b>NA</b>
                {label === "Peak:" && <span className="ml-[8px]">nm.</span>}
              </dd>
            </div>
          ))}
        </dl>
      </div>
      <h2 className="h-[36px] shrink-0 pl-[8px] text-[15px] leading-[34px] font-bold border-t border-b border-[#9a9a9a]">MEASUREMENTS</h2>
      <div className="flex-1 min-h-0 border-b-2 border-[#fbfbfb]">
        <table className="table-fixed w-full text-left whitespace-nowrap">
          <colgroup>
            <col className="w-[30px]" />
            <col className="w-[58px]" />
            <col className="w-[81px]" />
            <col className="w-[101px]" />
            <col className="w-[88px]" />
            <col className="w-[16px]" />
          </colgroup>
          <thead className="bg-white">
            <tr className="h-[35px] [&>th]:border-r [&>th]:border-[#e2e2e2] [&>th]:font-normal [&>th]:text-center">
              <th colSpan={2}>Name</th>
              <th>Type</th>
              <th>Units</th>
              <th>X</th>
              <th />
            </tr>
          </thead>
          <tbody>
            {measurements.map((m, i) => (
              <tr key={m.name} className={`h-[25px] leading-[25px] ${i === 0 ? "[&>td+td]:bg-[#cacaca]" : ""}`}>
                <td />
                <td className="pl-[4px]">
                  <span className="flex items-center gap-[10px]">
                    <span className={`w-[15px] h-[15px] border border-[#7a7a7a] ${m.color}`} />
                    {m.name}
                  </span>
                </td>
                <td className="pl-[5px] text-[17px]">{m.type}</td>
                <td className="pl-[4px] text-[17px]">{m.units}</td>
                <td className="pl-[5px]">{m.x}</td>
                <td className="pl-[4px]">{m.y}</td>
              </tr>
            ))}
          </tbody>
        </table>
      </div>
      <div className="h-[24px] shrink-0 pt-[10px] pl-[25px]">
        <div className="w-[186px] h-[3px] rounded-full bg-[#868686]" />
      </div>
    </aside>
  );
}

export default function App() {
  return (
    <div className="flex flex-col h-screen w-full overflow-hidden bg-[#b9d1ea] border-l-2 border-[#1c1c20] text-black font-['DejaVu_Sans_Condensed','Noto_Sans',sans-serif]">
      <TitleBar />
      <div className="flex flex-col flex-1 min-h-0 ml-[10px] mb-[2px] bg-[#f0f0f0]">
        <MenuBar />
        <Toolbar />
        <div className="flex flex-1 min-h-0">
          <Sidebar />
          <main className="flex flex-col flex-1 min-w-0">
            <div className="flex items-center h-[35px] shrink-0 pl-[10px] border-b border-[#9a9a9a]">
              <button aria-label="Add tab" className="flex items-center gap-[4px]">
                <Plus color="#2f86f0" />
                <Caret />
              </button>
            </div>
            <div className="flex flex-1 min-h-0">
              <section className="flex flex-col flex-1 min-w-0">
                <ChartTools />
                <SpectrumChart />
              </section>
              <Inspector />
            </div>
            <div className="flex items-start h-[108px] shrink-0 pt-[17px] border-t-2 border-[#b2b2b2]">
              {views.map((v) => (
                <button
                  key={v.label}
                  className={`flex flex-col items-center h-[68px] px-[9px] rounded-[3px] border ${
                    v.active ? "pt-[9px] border-[#99d1ff] bg-[#cce8ff]" : "pt-[7px] border-transparent"
                  }`}
                >
                  <span className="-mx-2">{v.icon}</span>
                  <span className="text-[16px] leading-[20px] whitespace-nowrap">{v.label}</span>
                </button>
              ))}
            </div>
            <footer className="flex items-center justify-between h-[35px] shrink-0 pl-[5px] border-t-2 border-[#b2b2b2]">
              <button aria-label="Dock left">
                <DockIcon />
              </button>
              <button aria-label="Dock right" className="-mr-[3px]">
                <DockIcon />
              </button>
            </footer>
          </main>
        </div>
      </div>
    </div>
  );
}
